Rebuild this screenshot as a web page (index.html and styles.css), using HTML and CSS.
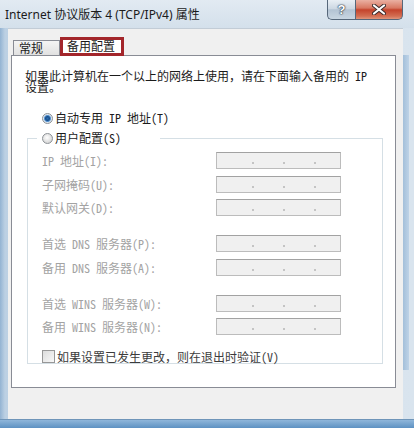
FILE: index.html
```html
<!DOCTYPE html>
<html lang="zh-CN">
<head>
<meta charset="utf-8">
<title>Internet 协议版本 4 (TCP/IPv4) 属性</title>
<link rel="stylesheet" href="styles.css">
</head>
<body>
<div class="window">
  <div class="titlebar">
    <span class="title">Internet 协议版本 4 (TCP/IPv4) 属性</span>
    <div class="caption-btns">
      <div class="cap-btn help"><span class="help-glyph">?</span></div>
      <div class="cap-btn close">
        <svg width="14" height="11" viewBox="0 0 14 11">
          <path d="M2 1.5 L12 9.5 M12 1.5 L2 9.5" stroke="#3a2a2a" stroke-width="4" stroke-linecap="round"/>
          <path d="M2 1.5 L12 9.5 M12 1.5 L2 9.5" stroke="#ffffff" stroke-width="2.2" stroke-linecap="round"/>
        </svg>
      </div>
    </div>
  </div>
  <div class="frame-row">
    <div class="frame-left"></div>
    <div class="client">
      <div class="tabs">
        <div class="tab">常规</div>
        <div class="tab selected">备用配置</div>
      </div>
      <div class="panel">
        <p class="desc">如果此计算机在一个以上的网络上使用，请在下面输入备用的 IP 设置。</p>
        <div class="radio-row">
          <span class="radio checked"></span>
          <span class="radio-label">自动专用 IP 地址(T)</span>
        </div>
        <fieldset class="group">
          <legend class="group-legend">
            <span class="radio"></span>
            <span class="radio-label">用户配置(S)</span>
          </legend>
          <div class="fields">
            <span class="field-label">IP 地址(I):</span>
            <div class="ipbox"><i></i><i></i><i></i></div>
            <span class="field-label">子网掩码(U):</span>
            <div class="ipbox"><i></i><i></i><i></i></div>
            <span class="field-label">默认网关(D):</span>
            <div class="ipbox"><i></i><i></i><i></i></div>
          </div>
          <div class="fields section">
            <span class="field-label">首选 DNS 服务器(P):</span>
            <div class="ipbox"><i></i><i></i><i></i></div>
            <span class="field-label">备用 DNS 服务器(A):</span>
            <div class="ipbox"><i></i><i></i><i></i></div>
          </div>
          <div class="fields section">
            <span class="field-label">首选 WINS 服务器(W):</span>
            <div class="ipbox"><i></i><i></i><i></i></div>
            <span class="field-label">备用 WINS 服务器(N):</span>
            <div class="ipbox"><i></i><i></i><i></i></div>
          </div>
          <div class="check-row">
            <span class="checkbox"></span>
            <span class="check-label">如果设置已发生更改，则在退出时验证(V)</span>
          </div>
        </fieldset>
      </div>
    </div>
    <div class="frame-right"><div class="frame-strip"></div></div>
  </div>
  <div class="frame-bottom"></div>
</div>
</body>
</html>
```
FILE: styles.css
```css
* { box-sizing: border-box; }
html, body { margin: 0; padding: 0; }
body {
  width: 414px;
  height: 428px;
  overflow: hidden;
  background: #c7d8e8;
  font-family: "Noto Sans CJK SC", sans-serif;
}
.window {
  width: 414px;
  height: 428px;
  display: flex;
  flex-direction: column;
  background: linear-gradient(90deg, #93b3d2 0, #bcd0e3 5px, #d3e0ec 40%, #d9e4ee 100%);
}
.titlebar {
  height: 28px;
  flex: none;
  display: flex;
  justify-content: space-between;
  align-items: flex-start;
  padding-left: 5px;
  background: linear-gradient(#e2eaf2, #d4e0eb);
}
.title {
  margin-top: 6px;
  font: 12px/18px "Noto Sans", "Noto Sans CJK SC", sans-serif;
  color: #1b1b1b;
}
.caption-btns {
  display: flex;
  margin-right: 11px;
}
.cap-btn {
  height: 20px;
  display: flex;
  align-items: center;
  justify-content: center;
  border: 1px solid #56677a;
  border-top: none;
}
.help {
  width: 28px;
  border-right: none;
  border-radius: 0 0 0 5px;
  background: linear-gradient(#e9eff5, #cdd8e3 45%, #b3c3d3 52%, #c9d6e2);
}
.help-glyph {
  font: bold 13px/1 "Liberation Sans", sans-serif;
  color: #fff;
  text-shadow: 0 0 1px #2c3a48, 0 0 1px #2c3a48, 0 0 2px #2c3a48;
}
.close {
  width: 48px;
  border-radius: 0 0 5px 0;
  background: linear-gradient(#eab0a2, #d87862 42%, #c4432c 52%, #d36e52 85%, #e0957c);
}
.frame-row {
  flex: 1;
  display: flex;
  min-height: 0;
}
.frame-left {
  width: 8px;
  flex: none;
}
.client {
  width: 395px;
  flex: none;
  background: #f0f0f0;
  padding: 9px 0 0 3px;
  border-top: 1px solid #c2ccd6;
}
.frame-right {
  flex: 1;
  padding: 27px 0 0 0;
}
.frame-strip {
  width: 6px;
  height: 315px;
  background: linear-gradient(90deg, #a3bfda, #bed3e7);
}
.frame-bottom {
  height: 9px;
  flex: none;
  background: linear-gradient(#8fb6da, #5d91c2);
  border-top: 1px solid #6f95b9;
}
.tabs {
  display: flex;
  align-items: flex-end;
  margin-left: 2px;
  margin-top: -1px;
}
.tab {
  width: 47px;
  height: 15px;
  border: 1px solid #898c95;
  border-bottom: none;
  background: linear-gradient(#f4f4f4, #e1e1e1);
  font-size: 12px;
  line-height: 14px;
  padding-left: 5px;
  color: #1b1b1b;
}
.tab.selected {
  position: relative;
  z-index: 1;
  width: 64px;
  height: 19px;
  margin-bottom: -1px;
  border: 3px solid #a3262b;
  background: #fff;
  padding-left: 4px;
  line-height: 12px;
}
.panel {
  width: 385px;
  height: 333px;
  border: 1px solid #898c95;
  background: #fff;
  font-family: "Noto Sans Mono CJK SC", "Noto Sans CJK SC", monospace;
}
.desc {
  margin: 14px 0 0 13px;
  max-width: 350px;
  font-size: 12px;
  line-height: 11px;
  color: #1b1b1b;
}
.radio-row {
  display: flex;
  align-items: center;
  gap: 2px;
  height: 14px;
  margin: 19px 0 0 30px;
}
.radio {
  width: 11px;
  height: 11px;
  flex: none;
  border-radius: 50%;
  border: 1px solid #8c9196;
  background: radial-gradient(circle at 45% 40%, #ffffff 0, #e6e6e6 45%, #c9c9c9 100%);
}
.radio.checked {
  background: radial-gradient(circle at 50% 50%, #2b6db0 0, #184f8c 2px, #6aa3dc 3.3px, #dce6ef 3.8px, #f4f4f4 100%);
}
.radio-label {
  font-size: 12px;
  line-height: 14px;
  color: #1b1b1b;
}
.group {
  width: 356px;
  margin: 6px 0 0 15px;
  padding: 7px 0 0 14px;
  border: 1px solid #d5dfe5;
}
.group-legend {
  display: flex;
  align-items: center;
  gap: 2px;
  width: 123px;
  height: 14px;
  margin-left: -5px;
  padding: 0 0 0 5px;
}
.fields {
  display: grid;
  grid-template-columns: 174px 125px;
  row-gap: 6.5px;
  align-items: center;
}
.fields.section {
  margin-top: 19px;
}
.field-label {
  font-size: 12px;
  line-height: 17px;
  color: #a3a3a3;
}
.ipbox {
  height: 17px;
  border: 1px solid #bcbcbc;
  border-top-color: #a2a2a2;
  background: #f0f0f0;
  display: flex;
  align-items: flex-end;
  gap: 29px;
  padding: 0 0 4px 35px;
}
.ipbox i {
  width: 2px;
  height: 2px;
  background: #c4c4c4;
}
.check-row {
  display: flex;
  align-items: center;
  gap: 2px;
  height: 13px;
  margin-top: 15px;
}
.checkbox {
  width: 13px;
  height: 13px;
  flex: none;
  border: 1px solid #979797;
  background: linear-gradient(135deg, #dcdcdc, #f8f8f8);
}
.check-label {
  font-size: 12px;
  line-height: 13px;
  color: #3c3c3c;
  white-space: nowrap;
}
```
